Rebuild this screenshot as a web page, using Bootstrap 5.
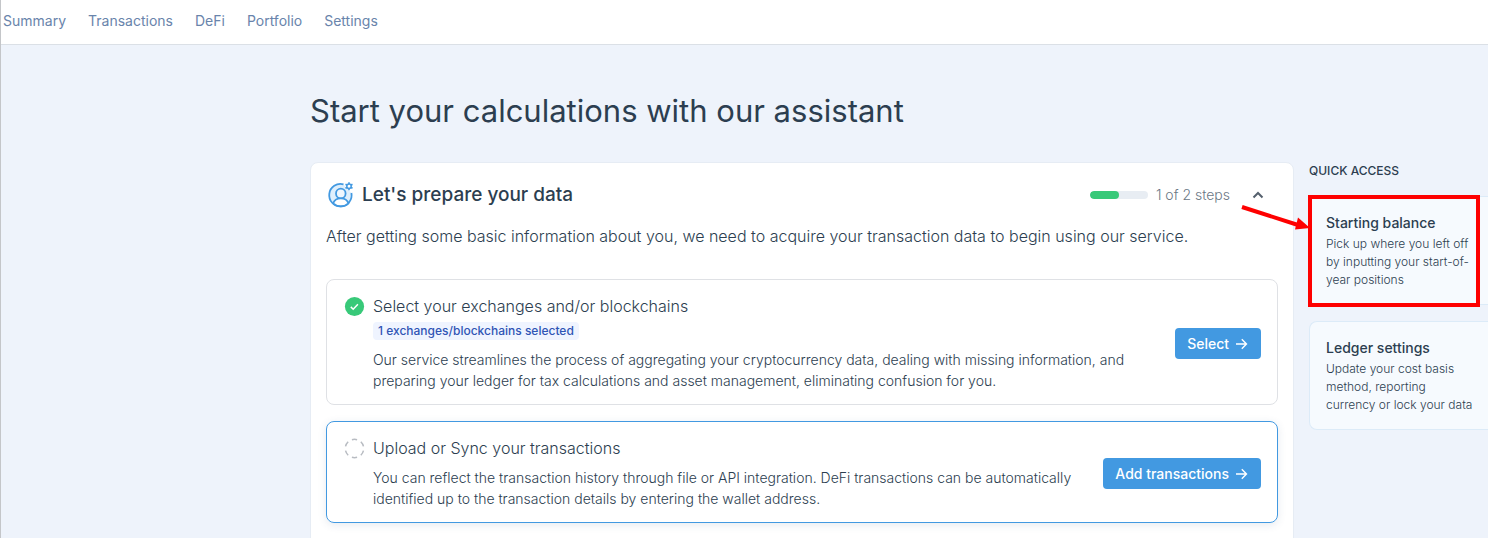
<!DOCTYPE html>
<html lang="en">
<head>
<meta charset="utf-8">
<meta name="viewport" content="width=device-width, initial-scale=1">
<title>Assistant</title>
<link rel="stylesheet" href="https://cdn.jsdelivr.net/npm/bootstrap@5.3.0/dist/css/bootstrap.min.css">
<style>
  body { font-family: Inter, "Liberation Sans", sans-serif; background: #eef3fb; color: #2c3e50; border-left: 1px solid #c4c6c9; min-height: 100vh; overflow-x: hidden; }
  .topbar { height: 45px; border-bottom: 1px solid #dbe0e6; padding: 0 0 2px 2px; gap: 22px; }
  .topbar a { font-size: 14px; line-height: 20px; color: #6984ab; text-decoration: none; }
  .layout { display: grid; grid-template-columns: minmax(0, 1fr) 179px; column-gap: 15px; padding-left: 309px; }
  h1 { font-size: 31px; line-height: 40px; font-weight: 400; margin: 46px 0 31px; }
  .panel { background: #fff; border: 1px solid #e6ecf4; border-radius: 8px; padding: 17px 15px 24px; }
  .panel h2 { font-size: 19px; line-height: 30px; font-weight: 500; }
  .intro { font-size: 16px; line-height: 24px; font-weight: 300; margin: 14px 0 31px; }
  .meter { width: 58px; height: 8px; border-radius: 4px; background: #e8edf3; }
  .meter .progress-bar { background: #38c979; border-radius: 4px; }
  .steps { font-size: 14px; line-height: 20px; font-weight: 300; color: #6b7785; }
  .step { border: 1px solid #dfe1e5; border-radius: 8px; padding: 15px 16px 13px 17px; margin-bottom: 16px; }
  .step.current { border-color: #4299e1; box-shadow: 0 2px 8px rgba(50, 80, 120, .12); }
  .step h3 { font-size: 16px; line-height: 22px; font-weight: 300; margin: 0; }
  .step p { font-size: 14px; line-height: 21px; font-weight: 300; margin: 8px 0 0; white-space: nowrap; }
  .state { margin-top: 1px; }
  .chip { display: inline-block; font-size: 12px; line-height: 18px; font-weight: 500; color: #2f55b5; background: #eff4ff; border-radius: 4px; padding: 0 5px; }
  .go { background: #4299e1; color: #fff; font-size: 14px; line-height: 20px; font-weight: 500; border: 0; border-radius: 4px; padding: 6px 12px 5px; white-space: nowrap; }
  aside h2 { font-size: 12px; line-height: 16px; font-weight: 500; margin: 118px 0 17px; }
  .quick { position: relative; display: block; background: #f6fafe; border: 1px solid #dcebf8; border-right: 0; border-radius: 8px 0 0 8px; padding: 16px 0 15px 16px; margin-bottom: 16px; color: #2c3e50; text-decoration: none; }
  .quick strong { display: block; font-size: 14px; line-height: 20px; font-weight: 500; margin-bottom: 2px; }
  .quick span { display: block; font-size: 12px; line-height: 18px; font-weight: 300; white-space: nowrap; }
  .marker { position: absolute; inset: -2px 8px -3px -2px; border: 4px solid #fe0000; }
  .pointer { position: absolute; left: -71px; top: 5px; }
</style>
</head>
<body>
<nav class="topbar d-flex align-items-center bg-white">
  <a href="#">Summary</a><a href="#">Transactions</a><a href="#">DeFi</a><a href="#">Portfolio</a><a href="#">Settings</a>
</nav>
<div class="layout">
  <main>
    <h1>Start your calculations with our assistant</h1>
    <section class="panel">
      <div class="d-flex align-items-center">
        <svg class="me-2" width="28" height="28" viewBox="0 0 28 28" fill="none" stroke="#4299e1" stroke-width="1.8">
          <path d="M17.500 3.400A11.200 11.200 0 1 0 25.400 12" fill="#dfeffc"/>
          <circle cx="14.800" cy="12.500" r="4.800" fill="#eff7fe"/>
          <path d="M7.200 22.300c1-3.300 3.900-5 7.600-5s6.600 1.700 7.600 5a11.200 11.200 0 0 1-15.200 0z" fill="#fff"/>
          <path d="M23 1.200v8M19.500 3.200l7 4M26.500 3.200l-7 4" stroke-width="1.600"/>
          <circle cx="23" cy="5.200" r="2.200" fill="#fff" stroke-width="1.500"/>
        </svg>
        <h2 class="mb-0 me-auto">Let's prepare your data</h2>
        <div class="meter progress me-2" role="progressbar" aria-label="Steps done" aria-valuenow="50" aria-valuemin="0" aria-valuemax="100"><div class="progress-bar" style="width:50%"></div></div>
        <span class="steps">1 of 2 steps</span>
        <button class="btn p-0 border-0 d-flex ms-3 me-2 px-1" type="button" aria-label="Collapse"><svg width="16" height="16" fill="none" stroke="#55606d" stroke-width="2"><path d="m3.500 10.500 4.500-4.500 4.500 4.500"/></svg></button>
      </div>
      <p class="intro">After getting some basic information about you, we need to acquire your transaction data to begin using our service.</p>
      <article class="step d-flex">
        <svg class="state flex-shrink-0 me-2" width="21" height="21" viewBox="0 0 21 21"><circle cx="10.500" cy="10.500" r="9.600" fill="#38c979"/><path d="m6.800 10.900 2.400 2.300 4.700-4.900" fill="none" stroke="#fff" stroke-width="1.500"/></svg>
        <div class="flex-grow-1">
          <h3>Select your exchanges and/or blockchains</h3>
          <span class="chip">1 exchanges/blockchains selected</span>
          <p>Our service streamlines the process of aggregating your cryptocurrency data, dealing with missing information, and<br>preparing your ledger for tax calculations and asset management, eliminating confusion for you.</p>
        </div>
        <button class="go btn align-self-center d-flex align-items-center" type="button">Select<svg class="ms-1" width="16" height="16" fill="none" stroke="#fff" stroke-width="1.400"><path d="M3 8h10.500M8.800 3.300 13.500 8l-4.700 4.700"/></svg></button>
      </article>
      <article class="step current d-flex mb-0">
        <svg class="state flex-shrink-0 me-2" width="21" height="21" viewBox="0 0 21 21"><circle cx="10.500" cy="10.500" r="9.200" fill="none" stroke="#b8bcc2" stroke-width="1.500" pathLength="60" stroke-dasharray="5.500 4.500" stroke-dashoffset="-2.250"/></svg>
        <div class="flex-grow-1">
          <h3>Upload or Sync your transactions</h3>
          <p>You can reflect the transaction history through file or API integration. DeFi transactions can be automatically<br>identified up to the transaction details by entering the wallet address.</p>
        </div>
        <button class="go btn align-self-center d-flex align-items-center" type="button">Add transactions<svg class="ms-1" width="16" height="16" fill="none" stroke="#fff" stroke-width="1.400"><path d="M3 8h10.500M8.800 3.300 13.500 8l-4.700 4.700"/></svg></button>
      </article>
    </section>
  </main>
  <aside>
    <h2>QUICK ACCESS</h2>
    <a class="quick" href="#"><strong>Starting balance</strong><span>Pick up where you left off<br>by inputting your start-of-<br>year positions</span>
      <i class="marker"></i>
      <svg class="pointer" width="72" height="32" viewBox="0 0 72 32"><path d="m3 5 56 18" stroke="#fe0000" stroke-width="4"/><path d="M59 15.500 71 26l-15 1.500z" fill="#fe0000"/></svg>
    </a>
    <a class="quick" href="#"><strong>Ledger settings</strong><span>Update your cost basis<br>method, reporting<br>currency or lock your data</span></a>
  </aside>
</div>
<script src="https://cdn.jsdelivr.net/npm/bootstrap@5.3.0/dist/js/bootstrap.bundle.min.js"></script>
</body>
</html>
